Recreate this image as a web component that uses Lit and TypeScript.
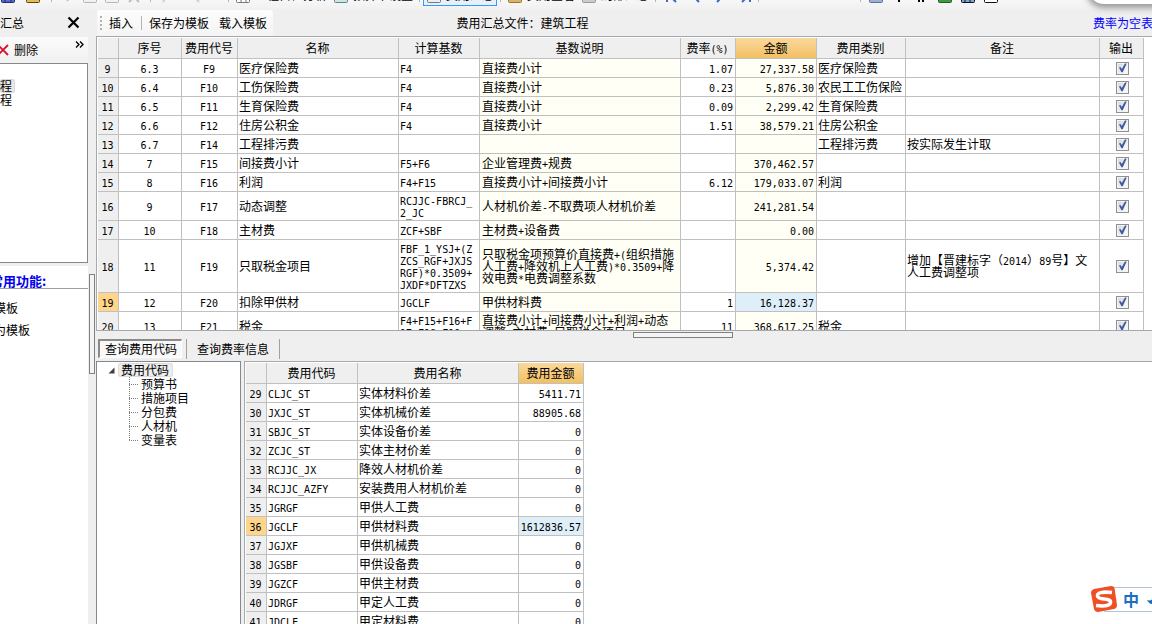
import { LitElement, html, css, svg } from "lit";
import { customElement, property } from "lit/decorators.js";
import { classMap } from "lit/directives/class-map.js";

/** Sets half-width runs in the monospaced face, the rest in the CJK face. */
const mixed = (text: string) =>
  text
    .split(/([\x21-\x7e]+)/)
    .filter((part) => part)
    .map((part) => (/^[\x21-\x7e]/.test(part) ? html`<span class="half">${part}</span>` : part));

const shared = css`
  * { box-sizing: border-box; }
  .half { font-family: "DejaVu Sans Mono", monospace; font-size: 10px; line-height: 0; }
  button, input { font: inherit; color: inherit; margin: 0; padding: 0; border: 0; background: none; }
  button { white-space: nowrap; text-align: left; }
`;

type Align = "left" | "center" | "right";
interface Column {
  title: string;
  width?: number;
  align?: Align;
  tint?: boolean;
  active?: boolean;
  check?: boolean;
}
interface Row {
  no: number;
  cells: string[];
  current?: boolean;
}

const feeColumns: Column[] = [
  { title: "序号", width: 63, align: "center" },
  { title: "费用代号", width: 56, align: "center" },
  { title: "名称", width: 161 },
  { title: "计算基数", width: 81 },
  { title: "基数说明", width: 201, tint: true },
  { title: "费率(%)", width: 55, align: "right" },
  { title: "金额", width: 81, align: "right", tint: true, active: true },
  { title: "费用类别", width: 89 },
  { title: "备注" },
  { title: "输出", width: 44, align: "center", check: true },
];

const feeRows: Row[] = [
  { no: 9, cells: ["6.3", "F9", "医疗保险费", "F4", "直接费小计", "1.07", "27,337.58", "医疗保险费", ""] },
  { no: 10, cells: ["6.4", "F10", "工伤保险费", "F4", "直接费小计", "0.23", "5,876.30", "农民工工伤保险", ""] },
  { no: 11, cells: ["6.5", "F11", "生育保险费", "F4", "直接费小计", "0.09", "2,299.42", "生育保险费", ""] },
  { no: 12, cells: ["6.6", "F12", "住房公积金", "F4", "直接费小计", "1.51", "38,579.21", "住房公积金", ""] },
  { no: 13, cells: ["6.7", "F14", "工程排污费", "", "", "", "", "工程排污费", "按实际发生计取"] },
  { no: 14, cells: ["7", "F15", "间接费小计", "F5+F6", "企业管理费+规费", "", "370,462.57", "", ""] },
  { no: 15, cells: ["8", "F16", "利润", "F4+F15", "直接费小计+间接费小计", "6.12", "179,033.07", "利润", ""] },
  { no: 16, cells: ["9", "F17", "动态调整", "RCJJC-FBRCJ_\n2_JC", "人材机价差-不取费项人材机价差", "", "241,281.54", "", ""] },
  { no: 17, cells: ["10", "F18", "主材费", "ZCF+SBF", "主材费+设备费", "", "0.00", "", ""] },
  {
    no: 18,
    cells: ["11", "F19", "只取税金项目", "FBF_1_YSJ+(Z\nZCS_RGF+JXJS\nRGF)*0.3509+\nJXDF*DFTZXS",
      "只取税金项预算价直接费+(组织措施\n人工费+降效机上人工费)*0.3509+降\n效电费*电费调整系数", "", "5,374.42", "",
      "增加【晋建标字（2014）89号】文\n人工费调整项"],
  },
  { no: 19, current: true, cells: ["12", "F20", "扣除甲供材", "JGCLF", "甲供材料费", "1", "16,128.37", "", ""] },
  {
    no: 20,
    cells: ["13", "F21", "税金", "F4+F15+F16+F\n17+F18+F19", "直接费小计+间接费小计+利润+动态\n调整+主材费+只取税金项目", "11",
      "368,617.25", "税金", ""],
  },
];

const codeColumns: Column[] = [
  { title: "费用代码", width: 91 },
  { title: "费用名称", width: 161 },
  { title: "费用金额", width: 65, align: "right", active: true },
];

const codeRows: Row[] = [
  { no: 29, cells: ["CLJC_ST", "实体材料价差", "5411.71"] },
  { no: 30, cells: ["JXJC_ST", "实体机械价差", "88905.68"] },
  { no: 31, cells: ["SBJC_ST", "实体设备价差", "0"] },
  { no: 32, cells: ["ZCJC_ST", "实体主材价差", "0"] },
  { no: 33, cells: ["RCJJC_JX", "降效人材机价差", "0"] },
  { no: 34, cells: ["RCJJC_AZFY", "安装费用人材机价差", "0"] },
  { no: 35, cells: ["JGRGF", "甲供人工费", "0"] },
  { no: 36, current: true, cells: ["JGCLF", "甲供材料费", "1612836.57"] },
  { no: 37, cells: ["JGJXF", "甲供机械费", "0"] },
  { no: 38, cells: ["JGSBF", "甲供设备费", "0"] },
  { no: 39, cells: ["JGZCF", "甲供主材费", "0"] },
  { no: 40, cells: ["JDRGF", "甲定人工费", "0"] },
  { no: 41, cells: ["JDCLF", "甲定材料费", "0"] },
];

@customElement("data-grid")
export class DataGrid extends LitElement {
  @property({ attribute: false }) columns: Column[] = [];
  @property({ attribute: false }) rows: Row[] = [];
  @property({ type: Boolean, reflect: true }) fill = false;

  static styles = [shared, css`
    :host { display: block; overflow: hidden; background: #fff; padding: 1px 0 0 1px; border: solid #a7a8ae; border-width: 1px 0 0 1px; }
    :host([fill]) { padding-right: 8px; border-bottom-width: 1px; }
    .grid { border-collapse: separate; border-spacing: 0; table-layout: fixed; width: 338px; }
    :host([fill]) .grid { width: 100%; }
    th, td { border: solid #c0c0c0; border-width: 0 1px 1px 0; padding: 0 2px 0 1px; font-weight: 400; overflow: hidden; white-space: pre; line-height: 12px; text-align: left; vertical-align: middle; }
    th { height: 21px; background: #efefef; text-align: center; padding: 0 1px 0 0; }
    td { height: 19px; }
    td.tall { padding-top: 2px; padding-bottom: 2px; }
    .no { background: #efefef; text-align: center; height: 19px; }
    .center { text-align: center; }
    .right { text-align: right; }
    .tint { background: #fffff5; }
    td.tint { padding-left: 2px; }
    td.checks { padding: 0 0 0 2px; }
    th.active { background: linear-gradient(#fad89c, #f2c062); }
    .current .no { background: #ffd48b; }
    .current .active { background: #dfeff9; }
    .box { appearance: none; display: block; width: 13px; height: 13px; margin: 0 auto; border: 1px solid #8e8f8f; background: linear-gradient(135deg, #cdd3de, #f6f6f6 75%); box-shadow: inset 0 0 0 1px #f4f4f4; }
    .box:checked::after { content: ""; display: block; width: 11px; height: 11px; background: #4058a0; clip-path: polygon(18% 46%, 32% 42%, 44% 60%, 72% 8%, 88% 8%, 52% 88%, 40% 88%); }
  `];

  private cell(row: Row, column: Column, index: number) {
    const text = row.cells[index] ?? "";
    const classes = {
      [column.align ?? "left"]: true,
      tint: !!column.tint,
      active: !!column.active,
      tall: text.includes("\n"),
    };
    return column.check
      ? html`<td class="checks"><input class="box" type="checkbox" checked aria-label="${column.title} ${row.no}"></td>`
      : html`<td class=${classMap(classes)}>${mixed(text)}</td>`;
  }

  render() {
    return html`<table class="grid">
      <colgroup><col width="21">${this.columns.map((c) => (c.width ? html`<col width=${c.width}>` : html`<col>`))}</colgroup>
      <thead><tr><th></th>${this.columns.map((c) => html`<th class=${classMap({ active: !!c.active })}>${mixed(c.title)}</th>`)}</tr></thead>
      <tbody>${this.rows.map((r) => html`<tr class=${classMap({ current: !!r.current })}><th class="no" scope="row">${mixed(String(r.no))}</th>${this.columns.map((c, i) => this.cell(r, c, i))}</tr>`)}</tbody>
    </table>`;
  }
}

@customElement("top-tools")
export class TopTools extends LitElement {
  static styles = [shared, css`
    :host { display: block; height: 10px; overflow: hidden; background: linear-gradient(#f7f7f7, #f0f0f0); }
    .tools { display: flex; align-items: center; height: 22px; margin-top: -16px; white-space: nowrap; }
    .tool { display: flex; flex: none; align-items: center; gap: 4px; height: 22px; padding: 0 3px; font-size: 12px; line-height: 14px; }
    .tool.on { padding: 0 2px; border: 1px solid #3399ff; background: #e6f0fa; }
    .icons { display: flex; flex: none; }
    .files { width: 48px; gap: 9px; }
    .edit { width: 92px; gap: 6px; padding-left: 5px; opacity: 0.5; }
    .undo { width: 71px; gap: 14px; padding-left: 5px; opacity: 0.35; }
    .arrows { width: 96px; gap: 9px; padding-left: 4px; }
    .views { gap: 7px; padding-left: 4px; }
    .line { flex: none; width: 1px; height: 14px; background: #b5b5b5; margin: 0 3px; }
    .wide { margin-right: 98px; }
    .ico { flex: none; display: block; width: 16px; height: 16px; }
  `];

  private icon(fill: string, stroke = "#777", detail = "") {
    return html`<svg class="ico" viewBox="0 0 16 16" aria-hidden="true">${svg`<rect x="1.5" y="2.500" width="13" height="13" rx="1" fill=${fill} stroke=${stroke} /><path d=${detail} stroke=${stroke} />`}</svg>`;
  }
  private arrow(path: string, stroke = "#3b69c4") {
    return html`<svg class="ico" viewBox="0 0 16 16" aria-hidden="true">${svg`<path d=${path} fill="none" stroke=${stroke} stroke-width="2" />`}</svg>`;
  }

  render() {
    return html`<div class="tools">
      <div class="icons files">${this.icon("#5a6ac4", "#202a78", "M5 11V15M11 11V15")}${this.icon("#e4bd55", "#5a4410")}</div>
      <span class="line"></span>
      <div class="icons edit">${this.arrow("M3 2L8 14", "#888")}${this.icon("#eee")}${this.icon("#eee")}${this.arrow("M3 15L8 10L13 15", "#888")}</div>
      <span class="line"></span>
      <div class="icons undo">${this.arrow("M8 9L4 15", "#888")}${this.arrow("M5 9L10 15", "#888")}</div>
      <span class="line"></span>
      <button class="tool">${this.icon("#fff", "#777", "M6 3V15M11 3V15M1 11H15")}工程自检分析</button>
      <button class="tool">${this.icon("#cfe8cf", "#5582b5")}预算书设置</button>
      <span class="line"></span>
      <button class="tool on">${this.icon("#eee")}费用汇总</button>
      <span class="line"></span>
      <button class="tool">${this.icon("#d9b466", "#9a7530")}费用查看</button>
      <button class="tool">${this.icon("#ccc", "#999")}局部汇总</button>
      <span class="line"></span>
      <div class="icons arrows">${this.arrow("M4 2V15M14 6L9 11L13 15")}${this.arrow("M11 7L7 11L11 15")}${this.arrow("M3 7L8 11L4 15")}${this.arrow("M4 15L8 11L4 7M12 2V15")}</div>
      <span class="line wide"></span>
      <span class="line"></span>
      <div class="icons views">${this.icon("#9cb0d2", "#5c7398")}${this.arrow("M8 13V15", "#000")}${this.arrow("M5 13V15M9 13V15", "#000")}${this.icon("#3f9a3f", "#206020")}${this.icon("#7ca6d8", "#111", "M5 11V15M10 11V15")}${this.icon("#fff", "#111")}</div>
    </div>`;
  }
}

@customElement("app-root")
export class AppRoot extends LitElement {
  static styles = [shared, css`
    :host { display: grid; grid-template-rows: auto minmax(0, 1fr); height: 100vh; overflow: hidden; position: relative; background: #efefef; color: #000; font: 12px/14px "Noto Sans CJK SC", sans-serif; }
    .body { display: grid; grid-template-columns: 88px 8px minmax(0, 1fr); min-height: 0; }

    .side { display: flex; flex-direction: column; min-width: 0; overflow: hidden; }
    .title { display: flex; align-items: center; justify-content: space-between; height: 27px; padding: 0 8px 2px 0; }
    .close { width: 13px; height: 13px; }
    .close svg, .delete svg, .more svg { display: block; }
    .sidebar-tools { display: flex; align-items: center; justify-content: space-between; height: 26px; padding-right: 4px; background: linear-gradient(#fbfbfb, #f1f1f1); }
    .delete { display: flex; align-items: center; gap: 5px; }
    .more { align-self: flex-start; padding-top: 4px; }
    .projects { height: 200px; padding-top: 15px; border: solid #828790; border-width: 1px 1px 1px 0; background: #fff; }
    .project { display: block; height: 14px; line-height: 14px; padding-right: 3px; }
    .picked { border-radius: 3px; background: #e9e9e9; box-shadow: inset 0 0 0 1px #d8d8d8; }
    .common { flex: 1; margin-top: 3px; background: #fff; }
    .heading { margin: 0; height: 23px; padding-top: 8px; border-bottom: 1px solid #a0a0a0; color: #0000ee; font-size: 13px; line-height: 14px; font-weight: 700; white-space: nowrap; text-indent: -10px; }
    .links { display: flex; flex-direction: column; gap: 8px; padding-top: 12px; }
    .links button { line-height: 14px; text-indent: -6px; }

    .vgrip { padding: 264px 1px 0; }
    .vgrip i { display: block; width: 6px; height: 100px; border: 1px solid #808080; background: #f4f4f4; }

    .main { display: grid; grid-template-rows: 26px 295px 30px minmax(0, 1fr); min-width: 0; min-height: 0; }
    .bar { display: grid; grid-template-columns: 1fr auto 1fr; align-items: stretch; padding-left: 1px; min-width: 0; white-space: nowrap; }
    .actions { display: flex; align-items: center; justify-self: start; padding: 0 6px 0 3px; background: linear-gradient(#fdfdfd, #f4f4f4); border-radius: 3px; }
    .dots { width: 2px; height: 14px; margin-right: 7px; background: repeating-linear-gradient(#b0b0b0 0 2px, transparent 2px 4px); }
    .rule { width: 1px; height: 14px; margin: 0 7px 0 8px; background: #b4b4b4; }
    .actions button + button { margin-left: 10px; }
    .caption, .hint { align-self: center; }
    .caption { padding-right: 204px; }
    .hint { justify-self: end; color: #0000ff; width: 59px; overflow: hidden; text-decoration: none; }

    .split { display: flex; flex-direction: column; justify-content: space-between; }
    .hgrip { align-self: center; width: 100px; height: 6px; margin: 1px 0 0 118px; border: 1px solid #808080; background: #f4f4f4; }
    .tabs { display: flex; align-items: flex-start; height: 22px; padding-left: 2px; }
    .tab { height: 19px; line-height: 19px; padding: 0 10px; }
    .tab.on { width: 84px; padding: 0 4px 0 5px; border: solid #8a8a8a; border-width: 2px 1px 1px 2px; border-right-color: #fff; border-bottom-color: #fff; background: #f8f8f8; line-height: 16px; }
    .tabs .edge { width: 1px; height: 20px; background: #a0a0a0; }
    .tab.on + .edge { margin-left: 4px; }

    .lower { display: grid; grid-template-columns: 145px minmax(0, 1fr); gap: 3px; min-height: 0; }
    .tree { background: #fff; border: solid #828790; border-width: 1px 1px 0 1px; padding: 1px 0 0 11px; overflow: hidden; }
    .root { display: flex; align-items: center; gap: 3px; height: 14px; }
    .root span { padding: 0 4px 0 3px; line-height: 14px; border-radius: 3px; background: #ededed; box-shadow: inset 0 0 0 1px #dcdcdc; }
    .root svg { display: block; }
    .leaves { list-style: none; margin: 0 0 0 21px; padding: 0; }
    .leaves li { display: flex; align-items: center; height: 14px; line-height: 14px; }
    .leaves li::before { content: ""; width: 9px; height: 14px; margin-right: 3px; background: repeating-linear-gradient(90deg, #808080 0 1px, transparent 1px 2px) 0 7px / 9px 1px no-repeat, repeating-linear-gradient(#808080 0 1px, transparent 1px 2px) 0 0 / 1px 14px no-repeat; }
    .leaves li:last-child::before { background-size: 9px 1px, 1px 8px; }

    .bubble { position: absolute; top: -30px; right: -30px; width: 94px; height: 34px; border-radius: 16px; background: #fff; box-shadow: 0 2px 6px 2px #999; }
    .ime { position: absolute; right: 0; bottom: 11px; display: flex; align-items: center; width: 62px; overflow: hidden; }
    .logo { position: relative; flex: none; }
    .strip { display: flex; align-items: center; flex: 1; height: 25px; margin-left: -14px; padding-left: 19px; gap: 8px; border: solid #b4c4d8; border-width: 1px 0; background: #fff; color: #1a6fc4; font-size: 16px; line-height: 22px; font-weight: 700; }
    .strip svg { flex: none; }
  `];

  render() {
    return html`
      <top-tools></top-tools>
      <div class="body">
        <aside class="side">
          <div class="title"><span>汇总</span>
            <button class="close" aria-label="关闭"><svg width="13" height="13" viewBox="0 0 13 13"><path d="M1.500 1.500L11.500 11.500M11.500 1.500L1.500 11.500" stroke="#000" stroke-width="2.200" /></svg></button>
          </div>
          <div class="sidebar-tools">
            <button class="delete"><svg width="9" height="12" viewBox="0 0 9 12"><path d="M-2 1L8 11M8 1L-2 11" stroke="#d8102c" stroke-width="1.800" /></svg>删除</button>
            <button class="more" aria-label="更多"><svg width="9" height="7" viewBox="0 0 9 7"><path d="M1 0.500L4 3.500L1 6.500M5 0.500L8 3.500L5 6.500" fill="none" stroke="#000" stroke-width="1.300" /></svg></button>
          </div>
          <div class="projects"><button class="project picked">程</button><button class="project">程</button></div>
          <section class="common">
            <h2 class="heading">常用功能:</h2>
            <div class="links"><button>模板</button><button>为模板</button></div>
          </section>
        </aside>
        <div class="vgrip"><i></i></div>
        <main class="main">
          <div class="bar">
            <div class="actions">
              <span class="dots"></span><button>插入</button><span class="rule"></span><button>保存为模板</button><button>载入模板</button>
            </div>
            <span class="caption">费用汇总文件：建筑工程</span>
            <a class="hint" href="#">费率为空表</a>
          </div>
          <data-grid fill .columns=${feeColumns} .rows=${feeRows}></data-grid>
          <div class="split">
            <i class="hgrip"></i>
            <div class="tabs" role="tablist">
              <button class="tab on" role="tab" aria-selected="true">查询费用代码</button><span class="edge"></span>
              <button class="tab" role="tab" aria-selected="false">查询费率信息</button><span class="edge"></span>
            </div>
          </div>
          <div class="lower">
            <nav class="tree">
              <div class="root"><svg width="7" height="7" viewBox="0 0 7 7"><path d="M6.500 0.500V6.500H0.500Z" fill="#404040" /></svg><span>费用代码</span></div>
              <ul class="leaves">${["预算书", "措施项目", "分包费", "人材机", "变量表"].map((t) => html`<li>${t}</li>`)}</ul>
            </nav>
            <data-grid .columns=${codeColumns} .rows=${codeRows}></data-grid>
          </div>
        </main>
      </div>
      <div class="bubble"></div>
      <div class="ime">
        <svg class="logo" width="28" height="28" viewBox="0 0 28 28" aria-hidden="true"><path d="M4 4L21 1Q24 1 24.500 3L27 20Q27 23 24 24L8 27Q5 27 4 24L1 8Q1 5 4 4Z" fill="#f04e23" /><path d="M22 7.500Q7 6 7.500 11Q8 13.500 14 14Q21 14.500 20.500 17.500Q20 22 6 20.500" fill="none" stroke="#fff" stroke-width="3.600" /></svg>
        <div class="strip"><span>中</span><svg width="12" height="12" viewBox="0 0 12 12" aria-hidden="true"><path d="M0 7Q5 9 8 2Q12 11 5 11Q2 11 0 7Z" fill="#1a6fc4" /></svg></div>
      </div>
    `;
  }
}
